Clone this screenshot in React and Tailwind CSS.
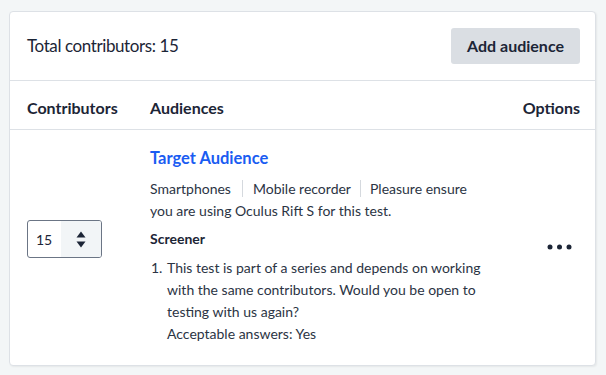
import { useState } from "react";

function NumberStepper() {
  const [value, setValue] = useState(15);

  return (
    <div className="flex h-[38px] w-[75px] overflow-hidden rounded-[3px] border border-[#6b7585] bg-white">
      <div className="flex w-[33px] items-center pl-[8px] text-[14px] text-[#1c2536]">{value}</div>
      <div className="flex flex-1 flex-col items-center justify-center gap-[3px] bg-[#f2f5f7]">
        <button onClick={() => setValue(value + 1)} className="leading-none">
          <svg width="10" height="7" viewBox="0 0 10 7">
            <path d="M5 0.5 L9.5 6.5 L0.5 6.5 Z" fill="#1c2536" />
          </svg>
        </button>
        <button onClick={() => setValue(Math.max(0, value - 1))} className="leading-none">
          <svg width="10" height="7" viewBox="0 0 10 7">
            <path d="M0.5 0.5 L9.5 0.5 L5 6.5 Z" fill="#1c2536" />
          </svg>
        </button>
      </div>
    </div>
  );
}

function App() {
  return (
    <div
      className="min-h-screen bg-[#f3f6f7] pl-[9px] pr-[10px] pt-[11px] text-[#1c2536]"
      style={{ fontFamily: "Lato, 'Open Sans', sans-serif" }}
    >
      <div className="rounded-[4px] border border-[#dde1e6] bg-white shadow-[1px_1px_2px_rgba(0,0,0,0.06)]">
        {/* header */}
        <div className="flex h-[69px] items-center justify-between border-b border-[#dde1e6] pl-[17px] pr-[15px]">
          <h1 className="text-[17px] tracking-[-0.4px] text-[#1c2536]">Total contributors: 15</h1>
          <button className="h-[36px] rounded-[3px] bg-[#dadee3] px-[16px] text-[16px] font-bold text-[#1c2536]">
            Add audience
          </button>
        </div>

        {/* table head */}
        <div className="flex h-[49px] items-center border-b border-[#dde1e6] pl-[17px] pr-[15px] pt-[6px] text-[16px] font-bold">
          <div className="w-[123px]">Contributors</div>
          <div className="flex-1">Audiences</div>
          <div>Options</div>
        </div>

        {/* row */}
        <div className="flex items-start pb-[20px] pl-[17px] pr-[23px] pt-[17px]">
          <div className="mt-[73px] w-[123px]">
            <NumberStepper />
          </div>
          <div className="w-[336px] text-[14px] leading-[22px]">
            <a href="#" className="text-[16.5px] font-bold text-[#1a5cf2]">
              Target Audience
            </a>
            <p className="mt-[8px] text-[#2b3444]">
              <span className="mr-[11px]">Smartphones</span>
              <span className="mr-[9px] border-l border-[#d5d9de] pl-[10px]">Mobile recorder</span>
              <span className="border-l border-[#d5d9de] pl-[9px]">
                Pleasure ensure you are using Oculus Rift S for this test.
              </span>
            </p>
            <h3 className="mt-[6px] font-bold">Screener</h3>
            <ol className="mt-[7px] list-decimal pl-[16px] text-[#2b3444]">
              <li className="pl-[1px]">
                This test is part of a series and depends on working with the same contributors. Would you be open to
                testing with us again?
                <br />
                Acceptable answers: Yes
              </li>
            </ol>
          </div>
          <div className="mt-[97px] flex flex-1 justify-end">
            <svg width="25" height="6" viewBox="0 0 25 6">
              <circle cx="3" cy="3" r="2.5" fill="#1c2536" />
              <circle cx="12.5" cy="3" r="2.5" fill="#1c2536" />
              <circle cx="22" cy="3" r="2.5" fill="#1c2536" />
            </svg>
          </div>
        </div>
      </div>
    </div>
  );
}

export default App;
